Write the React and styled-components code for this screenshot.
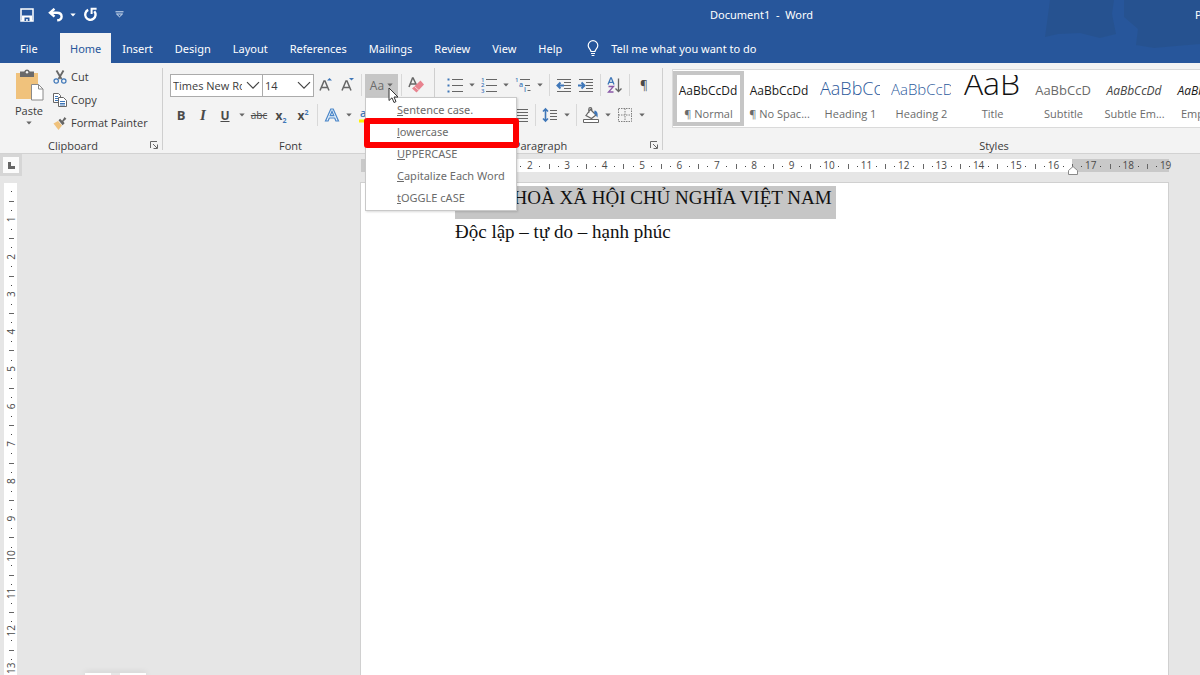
import React, { useState } from 'react';
import styled, { createGlobalStyle, css } from 'styled-components';

const GlobalStyle = createGlobalStyle`
  * {
    box-sizing: border-box;
  }

  body {
    margin: 0;
    font-family: 'Open Sans', 'Noto Sans', sans-serif;
    font-size: 11px;
    color: #3b3b3b;
  }

  button, select {
    font: inherit;
    color: inherit;
  }
`;

const Window = styled.div`
  display: flex;
  flex-direction: column;
  height: 100vh;
  overflow: hidden;
  background-color: #e6e6e6;
`;

const Header = styled.header`
  position: relative;
  background-color: #27569b;
  color: white;
  font-family: 'Noto Sans', sans-serif;
`;

const Smudges = styled.svg`
  position: absolute;
  top: 0;
  right: 0;
`;

const TitleBar = styled.div`
  position: relative;
  display: flex;
  align-items: center;
  height: 33px;
  padding-bottom: 4px;
  overflow: hidden;
  white-space: nowrap;
`;

const QuickAccess = styled.div`
  display: flex;
  align-items: center;
  width: 328px;
  padding-left: 15px;
`;

const QuickButton = styled.button`
  display: flex;
  align-items: center;
  justify-content: center;
  width: ${({ $narrow }) => ($narrow ? '10px' : '24px')};
  height: 24px;
  margin-right: ${({ $gap }) => ($gap ? '5px' : '0')};
  padding: 0;
  border: none;
  background: none;
`;

const DocumentTitle = styled.div`
  flex: 1;
  text-align: center;
  white-space: pre;
`;

const Account = styled.div`
  width: 5px;
`;

const Tabs = styled.nav`
  position: relative;
  display: flex;
  height: 30px;
`;

const Tab = styled.button`
  padding: 0 ${({ $active }) => ($active ? '10px' : '11px')};
  border: none;
  background-color: ${({ $active }) => ($active ? '#f3f3f3' : 'transparent')};
  color: ${({ $active }) => ($active ? '#27569b' : 'white')};
  white-space: nowrap;

  &:first-child {
    width: 60px;
    padding: 0 20px;
    text-align: left;
  }
`;

const TellMe = styled.button`
  display: flex;
  align-items: center;
  gap: 12px;
  margin-left: 14px;
  padding: 0;
  border: none;
  background: none;
  white-space: nowrap;
`;

const RibbonBar = styled.div`
  display: flex;
  height: 91px;
  background-color: #f3f3f3;
  border-bottom: 1px solid #d2d2d2;
`;

const GroupDivider = styled.div`
  flex: none;
  width: 1px;
  margin: 5px 0 3px;
  background-color: #cfcfcf;
`;

const Group = styled.section`
  display: flex;
  flex-direction: column;
  flex: none;
  width: ${({ $width }) => $width}px;
`;

const GroupFooter = styled.footer`
  display: flex;
  align-items: center;
  height: 16px;
  margin-top: auto;
  text-align: center;
`;

const GroupName = styled.span`
  flex: 1;
`;

const Launcher = styled.button`
  display: flex;
  align-items: center;
  justify-content: center;
  width: 16px;
  height: 16px;
  padding: 0;
  border: none;
  background: none;
`;

const ClipboardBody = styled.div`
  display: flex;
  gap: 4px;
  padding: 2px 0 0 9px;
`;

const PasteButton = styled.button`
  display: flex;
  flex-direction: column;
  align-items: center;
  gap: 2px;
  width: 40px;
  padding: 4px 0 0;
  border: none;
  background: none;
  line-height: 16px;
`;

const CommandList = styled.div`
  display: flex;
  flex-direction: column;
`;

const Command = styled.button`
  display: flex;
  align-items: center;
  gap: 4px;
  height: 23px;
  padding: 0;
  border: none;
  background: none;
  white-space: nowrap;
`;

const ToolRows = styled.div`
  display: flex;
  flex-direction: column;
  gap: 8px;
  padding: 11px 0 0 ${({ $indent }) => $indent}px;
`;

const ToolRow = styled.div`
  display: flex;
  align-items: center;
  height: 22px;
`;

const ToolButton = styled.button`
  display: flex;
  align-items: center;
  justify-content: center;
  flex: none;
  width: ${({ $caret }) => ($caret ? '12px' : '22px')};
  height: 22px;
  padding: 0;
  border: none;
  background: none;
  color: #4a4a4a;
  font-size: 12px;
`;

const ToolSeparator = styled.div`
  flex: none;
  width: 1px;
  height: 22px;
  margin: 0 3px;
  background-color: #d8d8d8;
`;

const SelectBox = styled.div`
  display: flex;
  align-items: center;
  position: relative;
  flex: none;
  width: ${({ $width }) => $width}px;
  height: 23px;
  border: 1px solid #ababab;
  background-color: white;

  & + & {
    margin-left: -1px;
  }

  svg {
    position: absolute;
    right: 2px;
    pointer-events: none;
  }
`;

const Select = styled.select`
  appearance: none;
  width: 100%;
  height: 100%;
  padding: 0 20px 0 2px;
  border: none;
  outline: none;
  background: none;
`;

const CaseAnchor = styled.div`
  position: relative;
`;

const CaseButton = styled.button`
  display: flex;
  align-items: center;
  justify-content: center;
  gap: 3px;
  width: 33px;
  height: 23px;
  padding: 0;
  border: none;
  background-color: #c6c6c6;
  color: #6a6a6a;
  font-size: 12px;
`;

const CaseMenu = styled.div`
  position: absolute;
  top: 23px;
  left: 0;
  z-index: 2;
  width: 152px;
  padding: 0 0 2px;
  border: 1px solid #c9c9c9;
  background-color: white;
  box-shadow: 1px 1px 2px rgba(0, 0, 0, 0.15);
  font-family: 'Noto Sans', sans-serif;
`;

const CaseItem = styled.button`
  position: relative;
  display: block;
  width: 100%;
  height: 22px;
  padding: 2px 0 0 31px;
  border: none;
  background: none;
  color: #6b6b6b;
  text-align: left;
  white-space: nowrap;

  ${({ $marked }) =>
    $marked &&
    css`
      &::after {
        content: '';
        position: absolute;
        inset: -2px -3px -6px -2px;
        border: 6px solid #fe0000;
        border-radius: 3px;
      }
    `}
`;

const Pointer = styled.svg`
  position: absolute;
  top: 13px;
  left: 23px;
  z-index: 3;
  pointer-events: none;
`;

const Gallery = styled.div`
  display: flex;
  margin: 6px 0 0 9px;
  padding: 1px 0;
  border: 1px solid #dadada;
  background-color: white;
`;

const StyleCard = styled.button`
  flex: none;
  width: 71px;
  height: 55px;
  padding: 0;
  border: 4px solid ${({ $selected }) => ($selected ? '#c6c6c6' : 'transparent')};
  background: none;
  color: #6b6b6b;
  text-align: center;
`;

const Preview = styled.div`
  height: 30px;
  margin: 0 2px 0 1px;
  overflow: hidden;
  line-height: 32px;
  white-space: nowrap;

  span {
    font-size: ${({ $size }) => $size}px;
    font-weight: ${({ $light }) => ($light ? 300 : 400)};
    font-style: ${({ $italic }) => ($italic ? 'italic' : 'normal')};
    line-height: 0;
    color: ${({ $color }) => $color};
  }
`;

const StyleName = styled.div`
  overflow: hidden;
  line-height: 17px;
  white-space: nowrap;
`;

const Workspace = styled.main`
  display: grid;
  grid-template-columns: 22px 1fr;
  grid-template-rows: 28px 1fr;
  flex: 1;
  min-height: 0;
  overflow: hidden;
`;

const TabStop = styled.button`
  width: 22px;
  height: 22px;
  padding: 0;
  border: 3px solid #d6d6d6;
  background-color: #fbfbfb;
  line-height: 0;
`;

const RulerTrack = styled.div`
  display: flex;
  justify-content: flex-end;
  padding: 5px 26px 0 0;
`;

const SideTrack = styled.div`
  padding-left: 4px;
  overflow: hidden;
`;

const PageTrack = styled.div`
  display: flex;
  justify-content: flex-end;
  padding-right: 31px;
`;

const Page = styled.article`
  width: 809px;
  padding: 3px 94px 0;
  border: solid #d0d0d0;
  border-width: 1px 1px 0;
  background-color: white;
  color: #111;
  font-family: 'Liberation Serif', serif;
  font-size: 19px;
  line-height: 24px;
`;

const Paragraph = styled.p`
  display: flex;
  height: 34px;
  margin: 0;
  white-space: nowrap;
`;

const Selection = styled.span`
  height: 33px;
  padding-right: 4px;
  background-color: #c6c6c6;
`;

const BottomTray = styled.div`
  position: fixed;
  bottom: 0;
  left: 85px;
  display: flex;
  gap: 9px;
  box-shadow: 0 0 6px rgba(0, 0, 0, 0.2);
`;

const TrayTile = styled.div`
  width: 26px;
  height: 2px;
  background-color: white;
`;

const CM = 37.4;

const Caret = ({ color = '#666' }) => (
  <svg width="6" height="4" viewBox="0 0 6 4">
    <path d="M0.3 0.5h5.4L3 3.5z" fill={color} />
  </svg>
);

const Chevron = () => (
  <svg width="14" height="9" viewBox="0 0 14 9">
    <path d="M1 1.2l6 6 6-6" fill="none" stroke="#444" strokeWidth="1.2" />
  </svg>
);

const Icon = ({ size = 16, children }) => (
  <svg width={size} height={size} viewBox={`0 0 ${size} ${size}`} fill="none" stroke="#666" strokeWidth="1">
    {children}
  </svg>
);

const SaveIcon = () => (
  <svg width="14" height="14" viewBox="0 0 14 14">
    <path d="M1 1h12v12H1z" fill="none" stroke="white" strokeWidth="1.5" />
    <path d="M2 7.5h10V13H2z" fill="white" />
    <path d="M4.5 9.5h5V13h-1.8v-2H6.2v2H4.5z" fill="#27569b" />
  </svg>
);

const UndoIcon = () => (
  <svg width="16" height="14" viewBox="0 0 16 14" fill="none" stroke="white" strokeWidth="2.4">
    <path d="M6.5 0.8L2 4.7l4.5 4" />
    <path d="M2.5 4.8H9c6 0 6.2 7.4 0.2 7.5" />
  </svg>
);

const RedoIcon = () => (
  <svg width="15" height="15" viewBox="0 0 15 15" fill="none" stroke="white" strokeWidth="2.4">
    <path d="M5.2 2.9A5.2 5.2 0 1 0 11.3 4.2" />
    <path d="M8.6 7V1.8h5" strokeWidth="2" />
  </svg>
);

const CustomizeIcon = () => (
  <svg width="9" height="7" viewBox="0 0 9 7" fill="none" stroke="#d8e4f4" strokeWidth="1">
    <path d="M0.5 0.8h8M1.5 3h6L4.5 5.8z" />
  </svg>
);

const BulbIcon = () => (
  <svg width="12" height="17" viewBox="0 0 12 17" fill="none" stroke="white" strokeWidth="1.2">
    <path d="M4 11.5c0-2-2.8-3-2.8-6a4.8 4.8 0 0 1 9.6 0c0 3-2.8 4-2.8 6zM4 13.5h4M4.6 15.5h2.8" />
  </svg>
);

const PasteIcon = () => (
  <svg width="30" height="32" viewBox="0 0 30 32">
    <rect x="2" y="4" width="22" height="26" fill="#f0c27c" />
    <path d="M6 2.5h4.2a3 3 0 0 1 5.6 0H20V8H6z" fill="#6a6a6a" />
    <circle cx="13" cy="3.2" r="1.2" fill="#f3f3f3" />
    <path d="M17.5 15.5h7l4.5 4.500v11H17.5z" fill="white" stroke="#8a8a8a" />
    <path d="M24.5 15.5V20H29" fill="none" stroke="#8a8a8a" />
  </svg>
);

const CutIcon = () => (
  <Icon size={14}>
    <path d="M3.5 0.5l5 8.5M10.5 0.5l-5 8.5" stroke="#666" strokeWidth="1.8" />
    <circle cx="3.2" cy="11" r="2.2" stroke="#3f77b8" strokeWidth="1.2" />
    <circle cx="10.8" cy="11" r="2.2" stroke="#3f77b8" strokeWidth="1.2" />
  </Icon>
);

const CopyIcon = () => (
  <Icon size={14}>
    <path d="M0.5 0.5h5l2 2v7h-7z" fill="white" />
    <path d="M2 3.5h3M2 5.5h3M2 7.5h3" stroke="#3f77b8" />
    <path d="M5.5 4.5h5l3 3v6h-8z" fill="white" />
    <path d="M7 8.5h5M7 10.5h5M7 12h5" stroke="#3f77b8" />
  </Icon>
);

const PainterIcon = () => (
  <Icon size={14}>
    <path d="M0.5 7.5l4.5-2.5 4 4.5-3.5 4.5z" fill="#f0c27c" stroke="none" />
    <path d="M5.5 4.2l1.6-1.4 2 2L11.6 1l1.8 1.8-3 2.8 1.2 1.6-2 2z" fill="#666" stroke="none" />
  </Icon>
);

const LauncherIcon = () => (
  <svg width="8" height="8" viewBox="0 0 8 8" fill="none" stroke="#666">
    <path d="M0.5 7V0.5H7M3 3l4 4M7.5 3.5v4h-4" />
  </svg>
);

const Lines = ({ x, rows, width }) => (
  <path d={rows.map((y) => `M${x} ${y}h${width}`).join('')} />
);

const BulletsIcon = () => (
  <Icon>
    <path d="M0.5 2.5h2M0.5 8.5h2M0.5 14.5h2" stroke="#3f77b8" strokeWidth="2" />
    <Lines x={5} rows={[2.5, 8.5, 14.5]} width={11} />
  </Icon>
);

const IconDigit = styled.text`
  font-size: ${({ $size }) => $size}px;
  font-weight: 600;
  fill: #3f77b8;
  stroke: none;
`;

const NumberingIcon = () => (
  <Icon>
    <IconDigit $size={6} x="0" y="5">1</IconDigit>
    <IconDigit $size={6} x="0" y="10">2</IconDigit>
    <IconDigit $size={6} x="0" y="16">3</IconDigit>
    <Lines x={5} rows={[2.5, 8.5, 14.5]} width={11} />
  </Icon>
);

const MultilevelIcon = () => (
  <Icon>
    <IconDigit $size={6} x="0" y="5">1</IconDigit>
    <IconDigit $size={7} x="4" y="10">a</IconDigit>
    <IconDigit $size={7} x="9" y="15">i</IconDigit>
    <path d="M5 2.5h10M10 8.5h5M12.5 13.5h3" />
  </Icon>
);

const IndentIcon = ({ outward }) => (
  <Icon>
    <path d="M1 2.5h14M8 5.5h7M8 8.5h7M8 11.5h7M1 14.5h14" />
    <path
      d={outward ? 'M8 8.500H1.500M4.500 5.500L1.500 8.500l3 3' : 'M0 8.500H6.500M3.500 5.500l3 3-3 3'}
      stroke="#3f77b8"
      strokeWidth="2"
    />
  </Icon>
);

const SortIcon = () => (
  <Icon>
    <path d="M1 7.5L3.7 1h0.6L7 7.5M2 5.3h4" stroke="#3f77b8" strokeWidth="1.3" />
    <path d="M1.5 9.5h5L1.5 15h5" stroke="#8a5aa8" strokeWidth="1.3" />
    <path d="M11.5 1.5v13M8.5 11.5l3 3 3-3" strokeWidth="1.3" />
  </Icon>
);

const AlignIcon = ({ kind }) => {
  const short = { left: 1, center: 3, right: 5, justify: 1 }[kind];
  const width = kind === 'justify' ? 14 : 10;
  return (
    <Icon>
      <Lines x={1} rows={[2.5, 8.5, 14.5]} width={14} />
      <Lines x={short} rows={[5.5, 11.5]} width={width} />
    </Icon>
  );
};

const SpacingIcon = () => (
  <Icon>
    <path d="M3.5 2v12M1 4.5L3.5 2 6 4.5M1 11.5L3.5 14 6 11.5" stroke="#3f77b8" strokeWidth="1.6" />
    <Lines x={8} rows={[3.5, 6.5, 9.5, 12.5]} width={7} />
  </Icon>
);

const ShadingIcon = () => (
  <Icon>
    <path d="M7.5 2.5l5.5 5.5-4.5 3.5L3 8.5zM5.8 6V2.2a1.5 1.5 0 0 1 3 0V4" fill="#fafafa" strokeWidth="1.2" />
    <path d="M11.5 3.5c3 0.5 3.6 3 3 7-1.6-1-1-3.5-3.5-3.5z" fill="#3f77b8" stroke="none" />
    <path d="M0.5 12.5h15v3H0.5z" fill="white" />
  </Icon>
);

const BordersIcon = () => (
  <Icon>
    <path d="M1.5 1.5h13v13H1.5zM8 1.5v13M1.5 8h13" strokeDasharray="1.5 1" stroke="#808080" />
  </Icon>
);

const GrowIcon = ({ shrink }) => (
  <Icon>
    <path d="M3 13.5L7 4h1l4 9.5M4.5 10.5h6" strokeWidth="1.5" />
    <path d={shrink ? 'M10 1h5l-2.5 2.5z' : 'M10 3.5h5L12.5 1z'} fill="#3f77b8" stroke="none" />
  </Icon>
);

const EraserIcon = () => (
  <Icon>
    <path d="M1 10L4.5 1h0.6L8.5 8M2.3 7h5" strokeWidth="1.5" />
    <path d="M12.5 3.5l3.5 4-7.500 8-4.500-4z" fill="#e8838f" stroke="none" />
    <path d="M6.5 9.500l4.500 4" stroke="#f8d5d9" />
  </Icon>
);

const HighlightIcon = () => (
  <Icon>
    <IconDigit as="text" x="2" y="10" fontSize="11" fill="#444" stroke="none">a</IconDigit>
    <path d="M1 12.500h14v3H1z" fill="#fff200" stroke="none" />
  </Icon>
);

const EffectsIcon = () => (
  <Icon>
    <path
      d="M1.500 14L6.800 2h2.400l5.300 12h-2.600l-1.200-3H5.300l-1.200 3zM6.200 8.700h3.600L8 4.300z"
      stroke="#4a86c8"
      strokeWidth="1.200"
      fill="#e9f2fb"
    />
  </Icon>
);

const Bold = styled.b`
  font-size: 13px;
`;

const Italic = styled.i`
  font-family: 'Liberation Serif', serif;
  font-size: 15px;
  font-weight: bold;
`;

const Underlined = styled.u`
  font-size: 12px;
  font-weight: bold;
`;

const Struck = styled.s`
  font-size: 10px;
`;

const Script = styled.span`
  font-weight: bold;

  sub, sup {
    font-size: 7px;
    color: #3f77b8;
    line-height: 0;
  }
`;

const CASES = [
  ['S', 'entence case.'],
  ['l', 'owercase'],
  ['U', 'PPERCASE'],
  ['C', 'apitalize Each Word'],
  ['t', 'OGGLE cASE'],
];

const STYLES = [
  { name: '¶ Normal', sample: 'AaBbCcDd', size: 12, color: '#1a1a1a' },
  { name: '¶ No Spac...', sample: 'AaBbCcDd', size: 12, color: '#1a1a1a' },
  { name: 'Heading 1', sample: 'AaBbCc', size: 18, color: '#2c5a9c', light: true },
  { name: 'Heading 2', sample: 'AaBbCcD', size: 15, color: '#2c5a9c', light: true },
  { name: 'Title', sample: 'AaB', size: 32, color: '#111', light: true },
  { name: 'Subtitle', sample: 'AaBbCcD', size: 13, color: '#6a6a6a' },
  { name: 'Subtle Em...', sample: 'AaBbCcDd', size: 12, color: '#444', italic: true },
  { name: 'Emphasis', sample: 'AaBbCcDd', size: 12, color: '#1a1a1a', italic: true },
];

const TABS = ['File', 'Home', 'Insert', 'Design', 'Layout', 'References', 'Mailings', 'Review', 'View', 'Help'];

const RulerText = styled.text`
  font-size: 10px;
  fill: #4a4a4a;
  text-anchor: middle;
`;

// quarter-centimetre steps, counted from the page margin
const marks = (from, to) => {
  const list = [];
  for (let q = from; q <= to; q += 1) {
    list.push(q);
  }
  return list;
};

const HorizontalRuler = () => {
  const zero = 93;
  return (
    <svg width="813" height="17" viewBox="0 0 813 17">
      <rect x="0" y="0" width="808" height="13" fill="#c9c9c9" />
      <rect x={zero} y="0" width="618" height="13" fill="white" />
      {marks(-9, 76).map((q) => {
        const x = zero + 1 + (q * CM) / 4;
        if (q % 4 === 0) {
          return q === 0 ? null : (
            <RulerText key={q} x={x} y="10">{Math.abs(q / 4)}</RulerText>
          );
        }
        return q % 2 === 0 ? (
          <rect key={q} x={Math.round(x)} y="5" width="1" height="5" fill="#666" />
        ) : (
          <rect key={q} x={Math.round(x)} y="7" width="1" height="1" fill="#444" />
        );
      })}
      <path d="M707.5 15.5v-4l4.5-4 4.5 4v4z" fill="white" stroke="#8a8a8a" />
    </svg>
  );
};

const VerticalRuler = () => (
  <svg width="14" height="600" viewBox="0 0 14 600">
    <rect x="0" y="1" width="13" height="600" fill="white" />
    {marks(1, 62).map((q) => {
      const y = (q * CM) / 4;
      if (q % 4 === 0) {
        return (
          <RulerText key={q} transform={`translate(11 ${y}) rotate(-90)`}>{q / 4}</RulerText>
        );
      }
      return q % 2 === 0 ? (
        <rect key={q} x="5" y={Math.round(y)} width="5" height="1" fill="#666" />
      ) : (
        <rect key={q} x="7" y={Math.round(y)} width="1" height="1" fill="#444" />
      );
    })}
  </svg>
);

const Drop = ({ label }) => (
  <ToolButton $caret aria-label={label}>
    <Caret />
  </ToolButton>
);

const Footer = ({ name }) => (
  <GroupFooter>
    <GroupName>{name}</GroupName>
    <Launcher aria-label={`${name} settings`}>
      <LauncherIcon />
    </Launcher>
  </GroupFooter>
);

const ClipboardGroup = () => (
  <Group $width={162}>
    <ClipboardBody>
      <PasteButton>
        <PasteIcon />
        Paste
        <Caret />
      </PasteButton>
      <CommandList>
        <Command><CutIcon />Cut</Command>
        <Command><CopyIcon />Copy</Command>
        <Command><PainterIcon />Format Painter</Command>
      </CommandList>
    </ClipboardBody>
    <Footer name="Clipboard" />
  </Group>
);

const FontGroup = () => {
  const [font, setFont] = useState('Times New Roman');
  const [size, setSize] = useState('14');

  return (
    <Group $width={271}>
      <ToolRows $indent={7}>
        <ToolRow>
          <SelectBox $width={93}>
            <Select aria-label="Font" value={font} onChange={(e) => setFont(e.target.value)}>
              <option>Times New Roman</option>
              <option>Calibri</option>
            </Select>
            <Chevron />
          </SelectBox>
          <SelectBox $width={52}>
            <Select aria-label="Font size" value={size} onChange={(e) => setSize(e.target.value)}>
              <option>12</option>
              <option>14</option>
            </Select>
            <Chevron />
          </SelectBox>
          <ToolButton aria-label="Increase font size"><GrowIcon /></ToolButton>
          <ToolButton aria-label="Decrease font size"><GrowIcon shrink /></ToolButton>
          <ToolSeparator />
          <CaseAnchor>
            <CaseButton aria-label="Change case">
              Aa
              <Caret />
            </CaseButton>
            <CaseMenu>
              {CASES.map(([key, rest]) => (
                <CaseItem key={key} $marked={key === 'l'}>
                  <u>{key}</u>{rest}
                </CaseItem>
              ))}
            </CaseMenu>
            <Pointer width="11" height="17" viewBox="0 0 11 17">
              <path d="M1 1v12.5l3-2.7 2 4.7 2-0.900-2-4.600h4z" fill="white" stroke="#333" />
            </Pointer>
          </CaseAnchor>
          <ToolSeparator />
          <ToolButton aria-label="Clear formatting"><EraserIcon /></ToolButton>
        </ToolRow>
        <ToolRow>
          <ToolButton><Bold>B</Bold></ToolButton>
          <ToolButton><Italic>I</Italic></ToolButton>
          <ToolButton><Underlined>U</Underlined></ToolButton>
          <Drop label="Underline style" />
          <ToolButton><Struck>abc</Struck></ToolButton>
          <ToolButton><Script>x<sub>2</sub></Script></ToolButton>
          <ToolButton><Script>x<sup>2</sup></Script></ToolButton>
          <ToolSeparator />
          <ToolButton aria-label="Text effects"><EffectsIcon /></ToolButton>
          <Drop label="Text effects options" />
          <ToolButton aria-label="Highlight"><HighlightIcon /></ToolButton>
        </ToolRow>
      </ToolRows>
      <Footer name="Font" />
    </Group>
  );
};

const ParagraphGroup = () => (
  <Group $width={227}>
    <ToolRows $indent={9}>
      <ToolRow>
        <ToolButton aria-label="Bullets"><BulletsIcon /></ToolButton>
        <Drop label="Bullet options" />
        <ToolButton aria-label="Numbering"><NumberingIcon /></ToolButton>
        <Drop label="Numbering options" />
        <ToolButton aria-label="Multilevel list"><MultilevelIcon /></ToolButton>
        <Drop label="Multilevel options" />
        <ToolSeparator />
        <ToolButton aria-label="Decrease indent"><IndentIcon outward /></ToolButton>
        <ToolButton aria-label="Increase indent"><IndentIcon /></ToolButton>
        <ToolSeparator />
        <ToolButton aria-label="Sort"><SortIcon /></ToolButton>
        <ToolSeparator />
        <ToolButton>¶</ToolButton>
      </ToolRow>
      <ToolRow>
        {['left', 'center', 'right', 'justify'].map((kind) => (
          <ToolButton key={kind} aria-label={`Align ${kind}`}><AlignIcon kind={kind} /></ToolButton>
        ))}
        <ToolSeparator />
        <ToolButton aria-label="Line spacing"><SpacingIcon /></ToolButton>
        <Drop label="Line spacing options" />
        <ToolSeparator />
        <ToolButton aria-label="Shading"><ShadingIcon /></ToolButton>
        <Drop label="Shading options" />
        <ToolButton aria-label="Borders"><BordersIcon /></ToolButton>
        <Drop label="Border options" />
      </ToolRow>
    </ToolRows>
    <Footer name="Paragraph" />
  </Group>
);

const StylesGroup = () => (
  <Group $width={678}>
    <Gallery>
      {STYLES.map((style, index) => (
        <StyleCard key={style.name} $selected={index === 0}>
          <Preview $size={style.size} $color={style.color} $light={style.light} $italic={style.italic}>
            <span>{style.sample}</span>
          </Preview>
          <StyleName>{style.name}</StyleName>
        </StyleCard>
      ))}
    </Gallery>
    <Footer name="Styles" />
  </Group>
);

const App = () => (
  <Window>
    <GlobalStyle />
    <Header>
      <Smudges width="156" height="50" viewBox="0 0 156 50" fill="#265089">
        <path d="M6 0h64l-2 14 4 20-16 4-20-5-22 1-13 3z" opacity="0.6" />
        <path d="M80 0h76v44l-24 2-22 2-18-3 2-16-14-12z" opacity="0.6" />
      </Smudges>
      <TitleBar>
        <QuickAccess>
          <QuickButton $gap aria-label="Save"><SaveIcon /></QuickButton>
          <QuickButton aria-label="Undo"><UndoIcon /></QuickButton>
          <QuickButton $narrow aria-label="Undo history"><Caret color="white" /></QuickButton>
          <QuickButton $gap aria-label="Redo"><RedoIcon /></QuickButton>
          <QuickButton aria-label="Customize toolbar"><CustomizeIcon /></QuickButton>
        </QuickAccess>
        <DocumentTitle>Document1  -  Word</DocumentTitle>
        <Account>P</Account>
      </TitleBar>
      <Tabs>
        {TABS.map((tab) => (
          <Tab key={tab} $active={tab === 'Home'}>{tab}</Tab>
        ))}
        <TellMe>
          <BulbIcon />
          Tell me what you want to do
        </TellMe>
      </Tabs>
    </Header>

    <RibbonBar>
      <ClipboardGroup />
      <GroupDivider />
      <FontGroup />
      <GroupDivider />
      <ParagraphGroup />
      <GroupDivider />
      <StylesGroup />
    </RibbonBar>

    <Workspace>
      <TabStop aria-label="Tab stop">
        <svg width="7" height="7" viewBox="0 0 7 7">
          <path d="M1.5 0v5.5H7" fill="none" stroke="#666" strokeWidth="3" />
        </svg>
      </TabStop>
      <RulerTrack>
        <HorizontalRuler />
      </RulerTrack>
      <SideTrack>
        <VerticalRuler />
      </SideTrack>
      <PageTrack>
        <Page>
          <Paragraph>
            <Selection>CỘNG HOÀ XÃ HỘI CHỦ NGHĨA VIỆT NAM</Selection>
          </Paragraph>
          <Paragraph>Độc lập – tự do – hạnh phúc</Paragraph>
        </Page>
      </PageTrack>
    </Workspace>

    <BottomTray>
      <TrayTile />
      <TrayTile />
    </BottomTray>
  </Window>
);

export default App;
